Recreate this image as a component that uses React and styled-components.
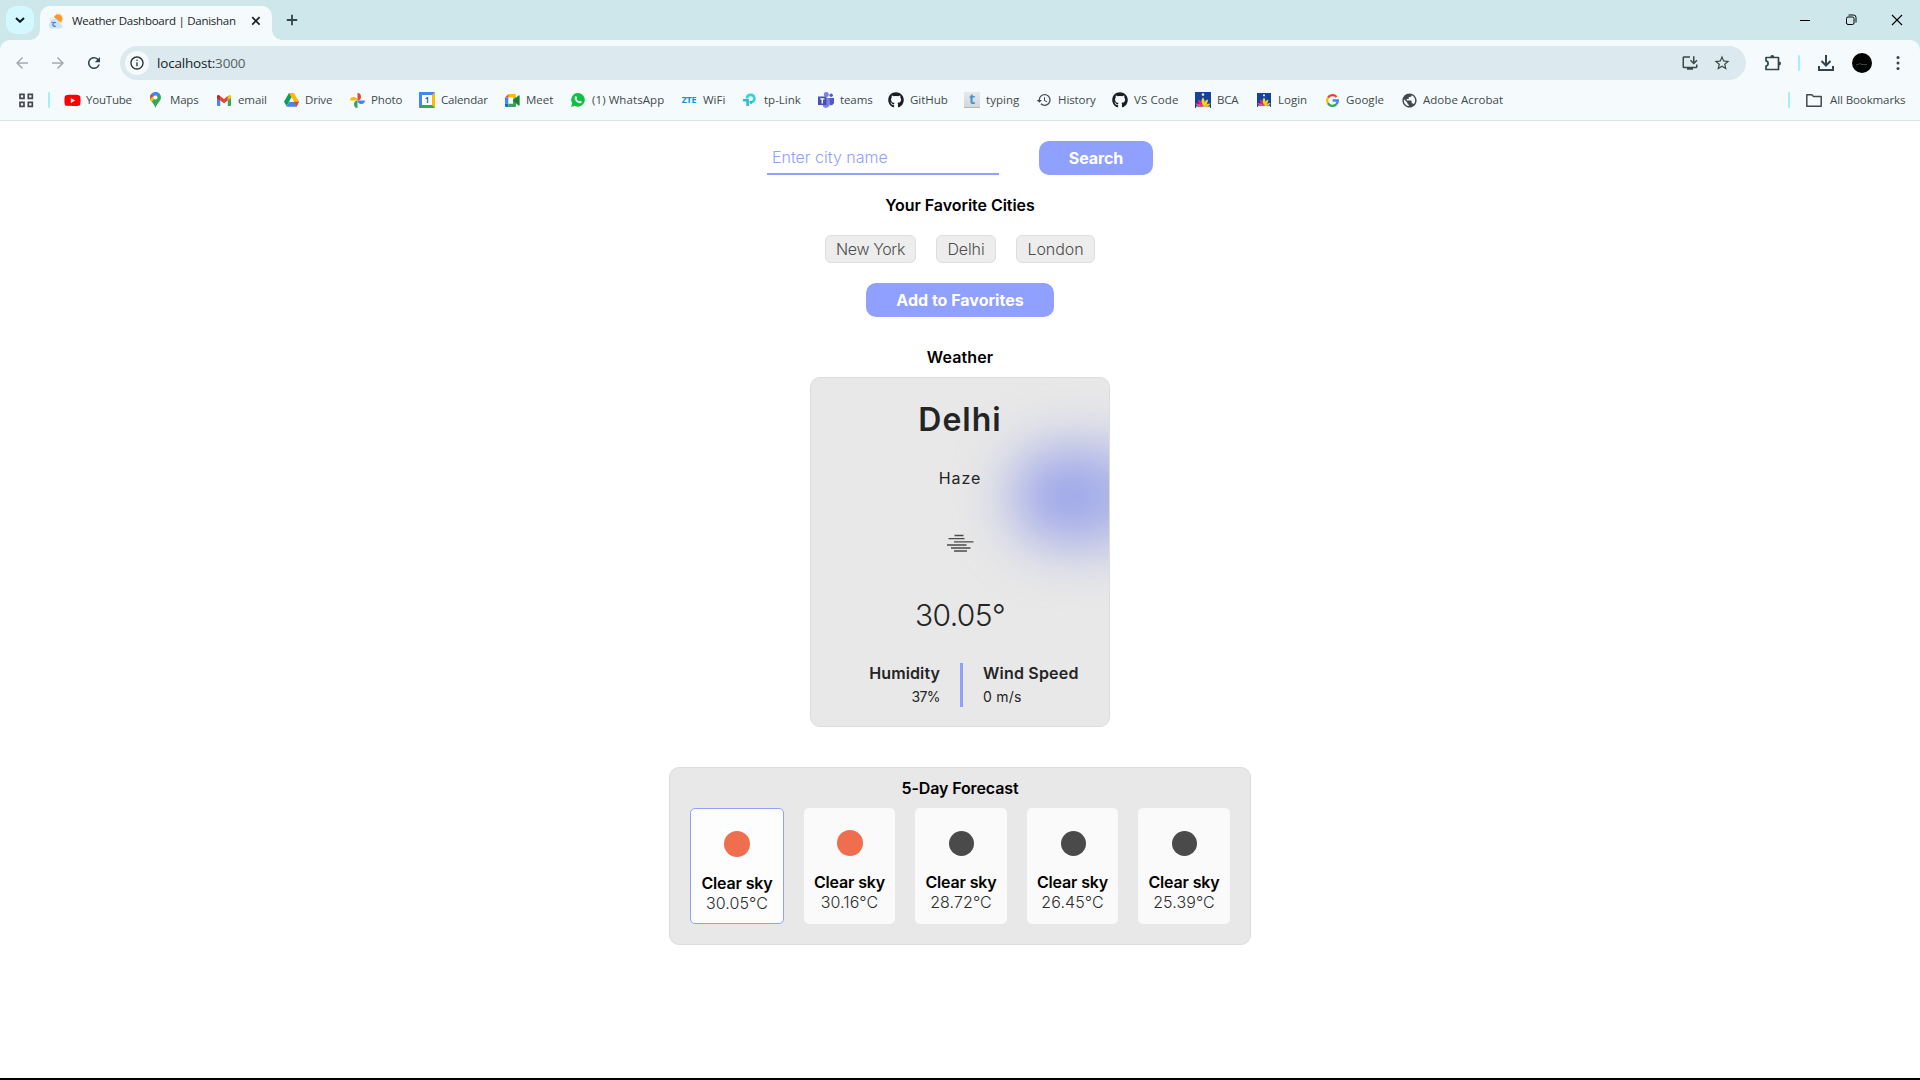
import React from "react";
import styled, { createGlobalStyle } from "styled-components";
import { FaGithub, FaYoutube } from "react-icons/fa";
import {
  MdArrowBack,
  MdArrowForward,
  MdRefresh,
  MdInfoOutline,
  MdInstallDesktop,
  MdStarBorder,
  MdHistory,
  MdPublic,
} from "react-icons/md";

const GlobalStyle = createGlobalStyle`
  *, *::before, *::after { box-sizing: border-box; }
  body {
    margin: 0;
    background: #fff;
    font-family: Inter, "Liberation Sans", sans-serif;
  }
  svg { display: block; flex: none; }
  h1, h2, h3, p { margin: 0; }
`;

/* ---------- browser chrome ---------- */

const Screen = styled.div`
  display: flex;
  flex-direction: column;
  height: 1080px;
  overflow: hidden;
  border-bottom: 2px solid #000;
`;

const Chrome = styled.header`
  font-family: "Open Sans", "Noto Sans", sans-serif;
  background: #cee7eb;
  border-bottom: 1px solid #dae3e6;
  height: 121px;
  flex: none;
`;

const TabStrip = styled.div`
  height: 40px;
  display: flex;
  align-items: flex-start;
  padding: 6px 0 0 6px;
`;

const TabSearch = styled.div`
  width: 28px;
  height: 28px;
  border-radius: 10px;
  background: #d3f8ff;
  display: flex;
  align-items: center;
  justify-content: center;
`;

const Tab = styled.div`
  position: relative;
  width: 232px;
  height: 34px;
  margin-left: 6px;
  padding: 0 11px 4px 8px;
  border-radius: 10px 10px 0 0;
  background: #f5fbfd;
  display: flex;
  align-items: center;
  &::before,
  &::after {
    content: "";
    position: absolute;
    bottom: 0;
    width: 10px;
    height: 10px;
  }
  &::before {
    left: -10px;
    background: radial-gradient(circle at 0 0, transparent 9.5px, #f5fbfd 10px);
  }
  &::after {
    right: -10px;
    background: radial-gradient(circle at 100% 0, transparent 9.5px, #f5fbfd 10px);
  }
`;

const TabTitle = styled.span`
  margin-left: 8px;
  flex: 1;
  font-size: 11.5px;
  letter-spacing: -0.26px;
  line-height: 16px;
  color: #1b2326;
  white-space: nowrap;
`;

const NewTab = styled.div`
  width: 28px;
  height: 28px;
  margin-left: 6px;
  display: flex;
  align-items: center;
  justify-content: center;
`;

const WindowButtons = styled.div`
  margin-left: auto;
  height: 28px;
  display: flex;
  align-items: center;
  gap: 34px;
  padding-right: 17px;
`;

const Toolbar = styled.div`
  height: 40px;
  padding: 6px 14px 0 12px;
  border-radius: 10px 10px 0 0;
  background: #f5fbfd;
  display: flex;
  align-items: flex-start;
`;

const NavButton = styled.div`
  width: 20px;
  height: 34px;
  margin-right: 16px;
  display: flex;
  align-items: center;
  justify-content: center;
  color: ${(p) => (p.$dim ? "#a3abae" : "#34444a")};
`;

const AddressBar = styled.div`
  flex: 1;
  height: 34px;
  border-radius: 17px;
  background: #dceaef;
  display: flex;
  align-items: center;
  padding: 0 15px 0 5px;
  color: #3b464a;
`;

const SiteInfo = styled.div`
  width: 24px;
  height: 24px;
  border-radius: 50%;
  background: #f5fbfd;
  color: #26302f;
  display: flex;
  align-items: center;
  justify-content: center;
`;

const Url = styled.span`
  flex: 1;
  margin-left: 8px;
  font-size: 13.5px;
  letter-spacing: -0.2px;
  line-height: 20px;
  color: #566164;
  b {
    font-weight: 400;
    color: #171d1f;
  }
`;

const OmniboxIcons = styled.div`
  display: flex;
  align-items: center;
  gap: 14px;
`;

const ToolbarIcons = styled.div`
  height: 34px;
  display: flex;
  align-items: center;
  padding-left: 18px;
  color: #34444a;
`;

const Separator = styled.i`
  width: 2px;
  height: 16px;
  border-radius: 1px;
  background: #a5eefd;
  margin: ${(p) => p.$margin};
`;

const Avatar = styled.div`
  width: 20px;
  height: 20px;
  border-radius: 50%;
  background: #020303;
  margin-left: 18px;
  margin-right: 18px;
  display: flex;
  align-items: center;
  justify-content: center;
`;

const Bookmarks = styled.nav`
  height: 40px;
  background: #f5fbfd;
  display: flex;
  align-items: center;
  padding: 0 14px 0 19px;
`;

const Bookmark = styled.div`
  flex: none;
  width: ${(p) => p.$w}px;
  display: flex;
  align-items: center;
  gap: 6px;
  font-size: 11.5px;
  line-height: 16px;
  letter-spacing: ${(p) => p.$ls}px;
  color: #41494c;
  white-space: nowrap;
`;

const AllBookmarks = styled(Bookmark)`
  gap: 8px;
`;

const Spacer = styled.div`
  flex: 1;
`;

const IconSlot = styled.span`
  width: 16px;
  height: 16px;
  display: flex;
  align-items: center;
  justify-content: center;
  color: ${(p) => p.$color || "inherit"};
`;

const ZteMark = styled.span`
  font: 700 9px/16px "Open Sans", sans-serif;
  letter-spacing: -0.3px;
  color: #1692d0;
`;

const TypingMark = styled.span`
  width: 16px;
  height: 16px;
  background: linear-gradient(#e6e8e9, #d5d8da);
  border-bottom: 1px solid #b2b7ba;
  color: #3f96d8;
  font: 700 14px/14px "Open Sans", sans-serif;
  letter-spacing: 0;
  text-align: center;
`;

/* ---------- page ---------- */

const Page = styled.main`
  flex: 1;
  display: flex;
  flex-direction: column;
  align-items: center;
  padding-top: 20px;
`;

const SearchRow = styled.form`
  display: flex;
  gap: 40px;
`;

const CityInput = styled.input`
  width: 232px;
  height: 34px;
  padding: 0 5px;
  border: 0;
  border-bottom: 2px solid #90a0ff;
  background: transparent;
  font: 300 16px Inter, sans-serif;
  letter-spacing: 0;
  &::placeholder {
    color: #90a0ff;
    opacity: 1;
  }
`;

const Button = styled.button`
  width: ${(p) => p.$w}px;
  height: 34px;
  padding: 0;
  border: 0;
  border-radius: 10px;
  background: #90a0ff;
  color: #fff;
  font: 700 16px/34px Inter, sans-serif;
  letter-spacing: ${(p) => p.$ls}px;
`;

const Heading = styled.h3`
  font-size: 16px;
  font-weight: 600;
  line-height: 20px;
  letter-spacing: ${(p) => p.$ls || 0}px;
  color: #000;
`;

const FavoritesHeading = styled(Heading)`
  margin-top: 20px;
`;

const Chips = styled.div`
  display: flex;
  gap: 20px;
  margin: 20px 0 20px;
`;

const Chip = styled.div`
  width: ${(p) => p.$w}px;
  height: 28px;
  border: 1px solid #dedede;
  border-radius: 6px;
  background: #ededed;
  color: #4e4e4e;
  font-size: 16px;
  font-weight: 300;
  line-height: 27px;
  text-align: center;
  letter-spacing: ${(p) => p.$ls}px;
`;

const WeatherHeading = styled(Heading)`
  margin-top: 30px;
`;

const WeatherCard = styled.section`
  position: relative;
  overflow: hidden;
  width: 300px;
  height: 350px;
  margin-top: 10px;
  border: 1px solid #dcdcdc;
  border-radius: 10px;
  background: #e8e8e8;
  color: #242424;
  display: flex;
  flex-direction: column;
  align-items: center;
`;

const Glow = styled.div`
  position: absolute;
  top: 70px;
  left: 202px;
  width: 160px;
  height: 96px;
  border-radius: 48px;
  background: linear-gradient(90deg, #98a2e9 35%, #b4bbe8 75%);
  filter: blur(28px);
`;

const City = styled.h1`
  position: relative;
  margin-top: 21px;
  font-size: 32px;
  font-weight: 600;
  line-height: 41px;
  letter-spacing: 1px;
`;

const Condition = styled.p`
  position: relative;
  margin-top: 28px;
  font-size: 16px;
  line-height: 20px;
  letter-spacing: 0.9px;
`;

const HazeIcon = styled.svg`
  position: relative;
  margin: 46px 0 0;
`;

const Temperature = styled.p`
  position: relative;
  margin-top: 43px;
  font-size: 30px;
  font-weight: 350;
  line-height: 40px;
  letter-spacing: -0.6px;
`;

const Stats = styled.div`
  position: relative;
  display: grid;
  grid-template-columns: 129px 3px 1fr;
  gap: 20px;
  width: 298px;
  margin-top: 28px;
  height: 43px;
`;

const Stat = styled.div`
  text-align: ${(p) => (p.$right ? "right" : "left")};
  strong {
    display: block;
    font-size: 16px;
    font-weight: 600;
    line-height: 21px;
    letter-spacing: ${(p) => (p.$right ? 0.1 : 0.2)}px;
  }
  span {
    display: block;
    margin-top: 3px;
    font-size: 14px;
    line-height: 20px;
    letter-spacing: ${(p) => p.$ls}px;
  }
`;

const StatDivider = styled.i`
  background: #90a0ff;
`;

const Forecast = styled.section`
  width: 582px;
  height: 178px;
  margin-top: 40px;
  padding: 10px 20px 0;
  border: 1px solid #dcdcdc;
  border-radius: 10px;
  background: #e8e8e8;
  display: flex;
  flex-direction: column;
  align-items: center;
`;

const Days = styled.div`
  display: grid;
  grid-template-columns: 94px 91px 92px 91px 92px;
  gap: 20px;
  margin-top: 10px;
`;

const Day = styled.article`
  height: 116px;
  padding-top: 22px;
  border: ${(p) => (p.$active ? "1px solid #90a0ff" : "0")};
  border-radius: 5px;
  background: ${(p) => (p.$active ? "#fdfdfd" : "#fafafa")};
  display: flex;
  flex-direction: column;
  align-items: center;
  strong {
    margin-top: 16px;
    font-size: 16px;
    font-weight: 600;
    line-height: 20px;
    letter-spacing: -0.15px;
    white-space: nowrap;
  }
  span {
    font-size: 16px;
    font-weight: 300;
    line-height: 20px;
    letter-spacing: 0.08px;
    color: #2d2d2d;
  }
`;

const Disc = styled.div`
  width: ${(p) => (p.$sunny ? 26 : 25)}px;
  height: ${(p) => (p.$sunny ? 26 : 25)}px;
  margin: ${(p) => (p.$sunny ? "0" : "1px 0 0 1px")};
  border-radius: 50%;
  background: ${(p) => (p.$sunny ? "#ee6e4d" : "#4a4a4b")};
`;

/* ---------- icons ---------- */

const WeatherFavicon = () => (
  <svg width="16" height="16" viewBox="0 0 16 16">
    <path d="M8.500 0l1.600 1.600L12.200.3l.5 2 2.200.1-.8 2.100L16 5.800l-1.800 1.400.4 2.300-3 .5-6-5.200 1-2.200 1.600-.3z" fill="#fcd27a" />
    <circle cx="10" cy="5.700" r="4.200" fill="#f39a35" />
    <path d="M1.500 4.500h5l4.500 4v4H3z" fill="#e6eff7" />
    <path d="M3.500 15.500a3.500 3.500 0 0 1-.6-6.600 4 4 0 0 1 7.300-1 3.200 3.200 0 0 1 3 3.400 2.200 2.200 0 0 1-.5 4.200z" fill="#cfe2f8" />
    <path d="M7.800 9.800a1.900 1.900 0 1 0 0 3.200" fill="none" stroke="#2f7be0" strokeWidth="1.200" />
    <circle cx="4" cy="9.300" r=".8" fill="#2f7be0" />
  </svg>
);

const GmailIcon = () => (
  <svg width="14" height="11" viewBox="0 0 14 11">
    <path d="M0 2v8a1 1 0 0 0 1 1h2.200V4.200z" fill="#4285f4" />
    <path d="M14 2v8a1 1 0 0 1-1 1h-2.200V4.200z" fill="#34a853" />
    <path d="M10.800 1L12 .3c.9-.6 2 .1 2 1.200V3l-3.200 2.400z" fill="#fbbc04" />
    <path d="M3.200 1L2 .3C1.100-.3 0 .4 0 1.500V3l3.200 2.400z" fill="#c5221f" />
    <path d="M3.200 1L7 3.900 10.800 1v4.400L7 8.300 3.200 5.400z" fill="#ea4335" />
  </svg>
);

const MapsIcon = () => (
  <svg width="16" height="16" viewBox="0 0 16 16">
    <g transform="translate(2 0)">
      <path d="M5.500 0A5.500 5.500 0 0 1 11 5.500C11 9 7 11 5.500 16 4 11 0 9 0 5.500A5.500 5.500 0 0 1 5.500 0z" fill="#34a853" />
      <path d="M9.700 2A5.500 5.500 0 0 0 4.200.2L1.300 2 0 5.500c0 1.500.6 2.700 1.500 3.800z" fill="#4285f4" />
      <path d="M1.300 2A5.500 5.500 0 0 0 .2 6.800l3.500-3z" fill="#ea4335" />
      <path d="M.2 6.800c.2.900.8 1.800 1.600 2.900l5.500-6L4 3.700z" fill="#fbbc04" />
      <circle cx="5.500" cy="5.500" r="2" fill="#fff" />
    </g>
  </svg>
);

const DriveIcon = () => (
  <svg width="15" height="14" viewBox="0 0 15 14">
    <path d="M5 0h5L5.100 8.700 2.600 13.300 0 8.700z" fill="#0f9d58" />
    <path d="M5 0h5l5 8.700H10z" fill="#ffba00" />
    <path d="M5.100 8.700H15l-2.500 5H2.500z" fill="#4285f4" />
    <path d="M10 8.700h5l-2.500 5z" fill="#ea4335" />
    <path d="M7.500 4.600L9.900 8.700H5.100z" fill="#f5fbfd" />
  </svg>
);

const PhotosIcon = () => (
  <svg width="15" height="15" viewBox="0 0 16 16">
    <path d="M4 4.300a3.700 3.700 0 0 1 4 3.700H0a3.900 3.900 0 0 1 4-3.700z" fill="#fbbc04" />
    <path d="M11.700 4A3.700 3.700 0 0 1 8 8V0a3.900 3.900 0 0 1 3.700 4z" fill="#ea4335" />
    <path d="M12 11.700A3.700 3.700 0 0 1 8 8h8a3.900 3.900 0 0 1-4 3.700z" fill="#4285f4" />
    <path d="M4.300 12A3.700 3.700 0 0 1 8 8v8a3.900 3.900 0 0 1-3.700-4z" fill="#34a853" />
  </svg>
);

const CalendarFrame = styled.span`
  width: 16px;
  height: 16px;
  flex: none;
  border-style: solid;
  border-width: 3px;
  border-color: #4285f4 #fbbc04 #34a853 #4285f4;
  border-radius: 1px;
  background: #fff;
  color: #1a66d8;
  font: 700 8px/10px "Open Sans", sans-serif;
  letter-spacing: 0;
  text-align: center;
`;

const MeetIcon = () => (
  <svg width="15" height="13" viewBox="0 0 15 13">
    <path d="M3.500 0H10a1 1 0 0 1 1 1v3.500H3.500z" fill="#fbbc04" />
    <path d="M3.500 0v3.500H0z" fill="#ea4335" />
    <path d="M0 3.500h3.500v6H0z" fill="#4285f4" />
    <path d="M0 9.500h3.500V13H1a1 1 0 0 1-1-1z" fill="#1967d2" />
    <path d="M3.500 9.500H8V5l3-2v9a1 1 0 0 1-1 1H3.500z" fill="#34a853" />
    <path d="M8 6.500L13.500 1.500c.6-.4 1.100-.1 1.100.5v9c0 .6-.5.9-1.100.5z" fill="#188038" />
    <path d="M3.500 3.500H8v6H3.500z" fill="#fff" />
  </svg>
);

const WhatsAppIcon = () => (
  <svg width="14" height="14" viewBox="0 0 14 14">
    <path d="M7.100 0a6.800 6.800 0 1 1-3.300 12.800L0 14l1.200-3.700A6.800 6.800 0 0 1 7.100 0z" fill="#0fc143" />
    <path d="M4.300 3.400c.5-.4 1-.3 1.200.2l.5 1.200c.1.300-.6.900-.5 1.200.5 1.100 1.400 1.900 2.500 2.400.4.100.8-.9 1.200-.7l1.300.7c.4.200.3.900-.1 1.300-.9.900-2.400.5-3.700-.3C5.400 8.600 4.300 7.300 3.800 6c-.3-1-.2-2 .5-2.600z" fill="#fff" />
  </svg>
);

const TpLinkIcon = () => (
  <svg width="14" height="14" viewBox="0 0 14 14" fill="none" strokeWidth="2.600">
    <path d="M4 5.500V5a3.700 3.700 0 1 1 4.500 4.200H7" stroke="#35d2dc" />
    <path d="M0 7.300h4.600V13" stroke="#2fb9d4" />
    <path d="M9 9.300H6.500" stroke="#2fb9d4" />
  </svg>
);

const TeamsIcon = () => (
  <svg width="16" height="16" viewBox="0 0 16 16">
    <circle cx="8.300" cy="2.500" r="2.500" fill="#7b83eb" />
    <circle cx="13.200" cy="3.300" r="1.700" fill="#5059c9" />
    <path d="M5 6h7v6a4 4 0 0 1-7 2.500z" fill="#7b83eb" />
    <path d="M11.500 6H16v4.500a2.800 2.800 0 0 1-4 2.500z" fill="#5059c9" />
    <path d="M0 4.500h8.500V13H0z" fill="#464eb8" />
    <path d="M2.200 6.300h4.200v1.300H5v4H3.600v-4H2.200z" fill="#fff" />
  </svg>
);

const GoogleIcon = () => (
  <svg width="13" height="13" viewBox="0 0 13 13" fill="none" strokeWidth="2.300">
    <path d="M10.600 3A5.300 5.300 0 0 0 2 3.700" stroke="#ea4335" />
    <path d="M2 3.700a5.300 5.300 0 0 0-.1 5.400" stroke="#fbbc04" />
    <path d="M1.900 9.100a5.300 5.300 0 0 0 8.300 1.300" stroke="#34a853" />
    <path d="M10.200 10.400A5.300 5.300 0 0 0 11.800 6.500H6.600" stroke="#4285f4" />
  </svg>
);

const UniversityIcon = ({ size }) => (
  <svg width={size} height={size} viewBox="0 0 16 16">
    <path d="M0 0h16v16H0z" fill="#15429b" />
    <path d="M1 14.500h14V16H1z" fill="#e9edf5" />
    <circle cx="8" cy="2.600" r="1.300" fill="#dfe8f8" />
    <path d="M8 5.200c2.200 2.600 2.200 6.300 0 9.300-2.200-3-2.200-6.700 0-9.300z" fill="#fbd51c" />
    <path d="M3 7.500c2.900.8 4.300 3 4.700 6.800C4.600 13.500 3.200 11 3 7.500z" fill="#e5258b" />
    <path d="M13 7.500c-2.900.8-4.300 3-4.700 6.800 3.100-.8 4.500-3.300 4.700-6.800z" fill="#fbd51c" />
    <path d="M.5 11.500c3.200-.2 5.200.8 7 3.200-3.200.8-5.700-.2-7-3.200z" fill="#f04e8e" />
    <path d="M15.500 11.500c-3.200-.2-5.200.8-7 3.200 3.200.8 5.700-.2 7-3.200z" fill="#f5c21f" />
  </svg>
);

const AppsIcon = () => (
  <svg width="15" height="15" viewBox="0 0 15 15" fill="none" stroke="#41494c" strokeWidth="1.700">
    <path d="M1 1.300h4v4H1zM9.300 1.300h4v4h-4zM1 9.300h4v4H1zM9.300 9.300h4v4h-4z" />
  </svg>
);

const ExtensionIcon = () => (
  <svg width="18" height="18" viewBox="0 0 18 18">
    <path
      d="M2 3.500h12.500v12H2v-3.400c2.800-.5 2.800-4.700 0-5.200z"
      fill="none"
      stroke="currentColor"
      strokeWidth="1.700"
      strokeLinejoin="round"
    />
    <path d="M6.300 3a2 2 0 0 1 4 0zM15 7.500a2 2 0 0 1 0 4z" fill="currentColor" />
  </svg>
);

const DownloadIcon = () => (
  <svg width="16" height="16" viewBox="0 0 16 16" fill="none" stroke="currentColor" strokeWidth="2">
    <path d="M8 0v10M3.500 6L8 10.500 12.500 6M1 11v4h14v-4" />
  </svg>
);

const FolderIcon = () => (
  <svg width="16" height="13" viewBox="0 0 16 13" fill="none" stroke="#41494c" strokeWidth="1.500" strokeLinejoin="round">
    <path d="M.8.800h5l1.700 1.700h7.700v9.700H.8z" />
  </svg>
);

const bookmarks = [
  { label: "YouTube", w: 84, ls: -0.2, icon: <FaYoutube size={17} />, color: "#fe0000" },
  { label: "Maps", w: 68, ls: -0.2, icon: <MapsIcon /> },
  { label: "email", w: 67, ls: -0.1, icon: <GmailIcon /> },
  { label: "Drive", w: 66, ls: -0.2, icon: <DriveIcon /> },
  { label: "Photo", w: 70, ls: -0.15, icon: <PhotosIcon /> },
  { label: "Calendar", w: 85, ls: -0.17, icon: <CalendarFrame>1</CalendarFrame> },
  { label: "Meet", w: 66, ls: 0, icon: <MeetIcon /> },
  { label: "(1) WhatsApp", w: 111, ls: 0.08, icon: <WhatsAppIcon /> },
  { label: "WiFi", w: 61, ls: 0, icon: <ZteMark>ZTE</ZteMark> },
  { label: "tp-Link", w: 76, ls: 0, icon: <TpLinkIcon /> },
  { label: "teams", w: 70, ls: -0.1, icon: <TeamsIcon /> },
  { label: "GitHub", w: 76, ls: -0.05, icon: <FaGithub size={16} />, color: "#1b1f23" },
  { label: "typing", w: 72, ls: 0.05, icon: <TypingMark>t</TypingMark> },
  { label: "History", w: 76, ls: -0.1, icon: <MdHistory size={16} /> },
  { label: "VS Code", w: 83, ls: 0.1, icon: <FaGithub size={16} />, color: "#1b1f23" },
  { label: "BCA", w: 61, ls: -0.2, icon: <UniversityIcon size={16} /> },
  { label: "Login", w: 68, ls: 0, icon: <UniversityIcon size={14} /> },
  { label: "Google", w: 77, ls: 0.05, icon: <GoogleIcon /> },
  { label: "Adobe Acrobat", w: 110, ls: 0.03, icon: <MdPublic size={17} /> },
];

const days = [
  { temp: "30.05°C", sunny: true, active: true },
  { temp: "30.16°C", sunny: true },
  { temp: "28.72°C" },
  { temp: "26.45°C" },
  { temp: "25.39°C" },
];

function BrowserChrome() {
  return (
    <Chrome>
      <TabStrip>
        <TabSearch>
          <svg width="10" height="6" viewBox="0 0 10 6" fill="none" stroke="#111a1c" strokeWidth="2">
            <path d="M1 1l4 3.800L9 1" />
          </svg>
        </TabSearch>
        <Tab>
          <WeatherFavicon />
          <TabTitle>Weather Dashboard | Danishan</TabTitle>
          <svg width="10" height="10" viewBox="0 0 10 10" stroke="#1b2326" strokeWidth="1.700">
            <path d="M1.200 1.200l7.400 7.400M8.600 1.200L1.200 8.600" />
          </svg>
        </Tab>
        <NewTab>
          <svg width="12" height="12" viewBox="0 0 12 12" stroke="#34444a" strokeWidth="1.800">
            <path d="M6 .8v10.400M.8 6h10.400" />
          </svg>
        </NewTab>
        <WindowButtons>
          <svg width="12" height="12" viewBox="0 0 12 12" stroke="#000">
            <path d="M1 6.500h10" />
          </svg>
          <svg width="12" height="12" viewBox="0 0 12 12" fill="none" stroke="#000">
            <rect x="1.500" y="3" width="7.500" height="7.500" rx="1.500" />
            <path d="M3.500 1h5a2.500 2.500 0 0 1 2.500 2.500v5" />
          </svg>
          <svg width="12" height="12" viewBox="0 0 12 12" stroke="#000" strokeWidth="1.100">
            <path d="M1 1l10 10M11 1L1 11" />
          </svg>
        </WindowButtons>
      </TabStrip>
      <Toolbar>
        <NavButton $dim><MdArrowBack size={18} /></NavButton>
        <NavButton $dim><MdArrowForward size={18} /></NavButton>
        <NavButton><MdRefresh size={18} /></NavButton>
        <AddressBar>
          <SiteInfo><MdInfoOutline size={16} /></SiteInfo>
          <Url><b>localhost:</b>3000</Url>
          <OmniboxIcons>
            <MdInstallDesktop size={18} />
            <MdStarBorder size={18} />
          </OmniboxIcons>
        </AddressBar>
        <ToolbarIcons>
          <ExtensionIcon />
          <Separator $margin="0 18px 0 16px" />
          <DownloadIcon />
          <Avatar>
            <svg width="12" height="5" viewBox="0 0 12 5" stroke="#4b5457" strokeWidth=".8">
              <path d="M0 4l5-1.500M5 3.500h6" />
            </svg>
          </Avatar>
          <svg width="16" height="16" viewBox="0 0 16 16" fill="currentColor">
            <circle cx="8" cy="2.500" r="1.500" />
            <circle cx="8" cy="8" r="1.500" />
            <circle cx="8" cy="13.500" r="1.500" />
          </svg>
        </ToolbarIcons>
      </Toolbar>
      <Bookmarks>
        <AppsIcon />
        <Separator $margin="0 14px" />
        {bookmarks.map((b) => (
          <Bookmark key={b.label} $w={b.w} $ls={b.ls}>
            <IconSlot $color={b.color}>{b.icon}</IconSlot>
            {b.label}
          </Bookmark>
        ))}
        <Spacer />
        <Separator $margin="0 16px 0 0" />
        <AllBookmarks $w={100} $ls={-0.1}>
          <IconSlot><FolderIcon /></IconSlot>
          All Bookmarks
        </AllBookmarks>
      </Bookmarks>
    </Chrome>
  );
}

export default function App() {
  return (
    <>
      <GlobalStyle />
      <Screen>
        <BrowserChrome />
        <Page>
          <SearchRow>
            <CityInput placeholder="Enter city name" />
            <Button type="button" $w={114} $ls={-0.1}>Search</Button>
          </SearchRow>
          <FavoritesHeading $ls={-0.05}>Your Favorite Cities</FavoritesHeading>
          <Chips>
            <Chip $w={91} $ls={-0.37}>New York</Chip>
            <Chip $w={60} $ls={-0.13}>Delhi</Chip>
            <Chip $w={79} $ls={-0.08}>London</Chip>
          </Chips>
          <Button type="button" $w={188} $ls={0}>Add to Favorites</Button>
          <WeatherHeading $ls={0.1}>Weather</WeatherHeading>
          <WeatherCard>
            <Glow />
            <City>Delhi</City>
            <Condition>Haze</Condition>
            <HazeIcon width="28" height="18" viewBox="0 0 28 18" stroke="#4a4a4b" strokeWidth="1.300">
              <path d="M8.500 1.500h9M2.500 4.700h16M8 7.800h19.500M1 11h19.500M5 14h19.500M8 17h13" />
            </HazeIcon>
            <Temperature>30.05°</Temperature>
            <Stats>
              <Stat $right $ls={-0.6}>
                <strong>Humidity</strong>
                <span>37%</span>
              </Stat>
              <StatDivider />
              <Stat $ls={0.2}>
                <strong>Wind Speed</strong>
                <span>0 m/s</span>
              </Stat>
            </Stats>
          </WeatherCard>
          <Forecast>
            <Heading $ls={-0.13}>5-Day Forecast</Heading>
            <Days>
              {days.map((d) => (
                <Day key={d.temp} $active={d.active}>
                  <Disc $sunny={d.sunny} />
                  <strong>Clear sky</strong>
                  <span>{d.temp}</span>
                </Day>
              ))}
            </Days>
          </Forecast>
        </Page>
      </Screen>
    </>
  );
}
